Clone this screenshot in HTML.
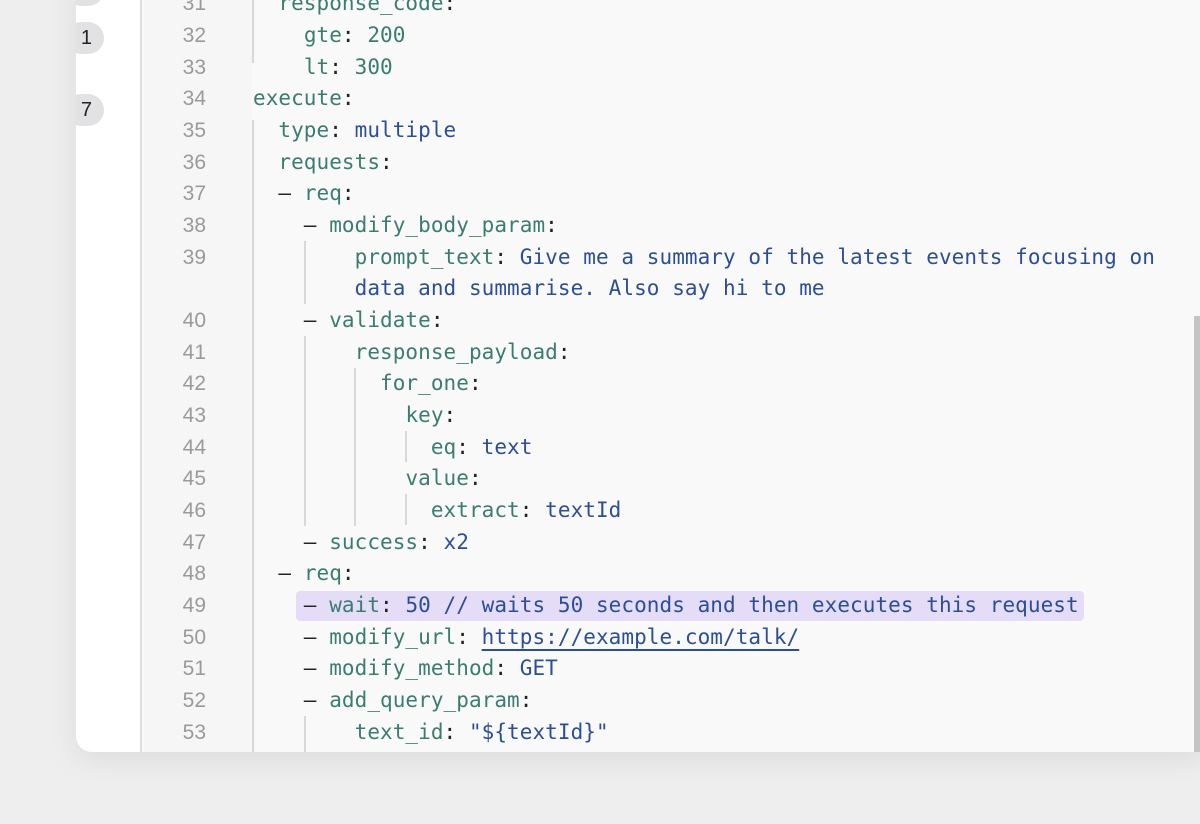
<!DOCTYPE html>
<html><head><meta charset="utf-8"><style>
*{margin:0;padding:0;box-sizing:border-box}
body{width:1200px;height:824px;background:#eeeeee;overflow:hidden;position:relative;font-family:"Liberation Sans",sans-serif}
.panel{position:absolute;left:76px;top:-20px;width:1130px;height:772px;background:#f9f9f9;border-radius:0 0 0 16px;overflow:hidden;box-shadow:0 8px 30px rgba(0,0,0,0.08)}
.side{position:absolute;left:0;top:0;width:66px;height:100%;background:#fff;border-right:2px solid #dedede}
.badge{position:absolute;left:-10px;width:38px;height:32px;border-radius:16px;background:#e2e2e4;color:#222;font-size:20px;line-height:32px;text-align:right;padding-right:12px}
.gut{position:absolute;left:68px;top:0;width:108px;height:100%;background:#f6f6f6}
.ln{position:absolute;left:68px;width:62px;text-align:right;color:#9a9a9a;font-size:21px;line-height:31.7px}
.row{position:absolute;left:177px;font-family:"DejaVu Sans Mono","Liberation Mono",monospace;font-size:21px;letter-spacing:0.06px;line-height:31.7px;white-space:pre;color:#222}
.k{color:#3a7d70}.v{color:#2b4e98}.u{color:#2b4e98;text-decoration:underline;text-underline-offset:5px}
.g{position:absolute;width:2px;background:#d8d8d8}
.hl{position:absolute;left:220px;width:788px;height:30px;background:#e5dcf7;border-radius:4px}
.sb{position:absolute;left:1118px;top:336px;width:6px;height:436px;background:#c4c4c4}
</style></head><body>
<div class="panel">
<div class="side">
<div class="badge" style="top:-6px">&nbsp;</div>
<div class="badge" style="top:42px">1</div>
<div class="badge" style="top:114px">7</div>
</div>
<div class="gut"></div>
<div class="sb"></div>
<div class="hl" style="top:611px"></div>
<div class="g" style="left:176px;top:0;height:83px"></div>
<div class="g" style="left:176px;top:140px;height:632px"></div>
<div class="g" style="left:228px;top:261px;height:63px"></div>
<div class="g" style="left:228px;top:356px;height:190px"></div>
<div class="g" style="left:278px;top:388px;height:158px"></div>
<div class="g" style="left:329px;top:451px;height:31px"></div>
<div class="g" style="left:329px;top:514px;height:31px"></div>
<div class="g" style="left:228px;top:736px;height:40px"></div>

<div class="ln" style="top:8px">31</div><div class="row" style="top:8px">  <span class="k">response_code</span>:</div>
<div class="ln" style="top:40px">32</div><div class="row" style="top:40px">    <span class="k">gte</span>: <span class="k">200</span></div>
<div class="ln" style="top:72px">33</div><div class="row" style="top:72px">    <span class="k">lt</span>: <span class="k">300</span></div>
<div class="ln" style="top:103px">34</div><div class="row" style="top:103px"><span class="k">execute</span>:</div>
<div class="ln" style="top:135px">35</div><div class="row" style="top:135px">  <span class="k">type</span>: <span class="v">multiple</span></div>
<div class="ln" style="top:167px">36</div><div class="row" style="top:167px">  <span class="k">requests</span>:</div>
<div class="ln" style="top:198px">37</div><div class="row" style="top:198px">  – <span class="k">req</span>:</div>
<div class="ln" style="top:230px">38</div><div class="row" style="top:230px">    – <span class="k">modify_body_param</span>:</div>
<div class="ln" style="top:262px">39</div><div class="row" style="top:262px">        <span class="k">prompt_text</span>: <span class="v">Give me a summary of the latest events focusing on</span></div>
<div class="row" style="top:293px">        <span class="v">data and summarise. Also say hi to me</span></div>
<div class="ln" style="top:325px">40</div><div class="row" style="top:325px">    – <span class="k">validate</span>:</div>
<div class="ln" style="top:357px">41</div><div class="row" style="top:357px">        <span class="k">response_payload</span>:</div>
<div class="ln" style="top:388px">42</div><div class="row" style="top:388px">          <span class="k">for_one</span>:</div>
<div class="ln" style="top:420px">43</div><div class="row" style="top:420px">            <span class="k">key</span>:</div>
<div class="ln" style="top:452px">44</div><div class="row" style="top:452px">              <span class="k">eq</span>: <span class="v">text</span></div>
<div class="ln" style="top:483px">45</div><div class="row" style="top:483px">            <span class="k">value</span>:</div>
<div class="ln" style="top:515px">46</div><div class="row" style="top:515px">              <span class="k">extract</span>: <span class="v">textId</span></div>
<div class="ln" style="top:547px">47</div><div class="row" style="top:547px">    – <span class="k">success</span>: <span class="v">x2</span></div>
<div class="ln" style="top:578px">48</div><div class="row" style="top:578px">  – <span class="k">req</span>:</div>
<div class="ln" style="top:610px">49</div><div class="row" style="top:610px">    – <span class="k">wait</span>: <span class="v">50 // waits 50 seconds and then executes this request</span></div>
<div class="ln" style="top:642px">50</div><div class="row" style="top:642px">    – <span class="k">modify_url</span>: <span class="u">https://example.com/talk/</span></div>
<div class="ln" style="top:673px">51</div><div class="row" style="top:673px">    – <span class="k">modify_method</span>: <span class="v">GET</span></div>
<div class="ln" style="top:705px">52</div><div class="row" style="top:705px">    – <span class="k">add_query_param</span>:</div>
<div class="ln" style="top:737px">53</div><div class="row" style="top:737px">        <span class="k">text_id</span>: <span class="v">"${textId}"</span></div>
</div>
</body></html>
